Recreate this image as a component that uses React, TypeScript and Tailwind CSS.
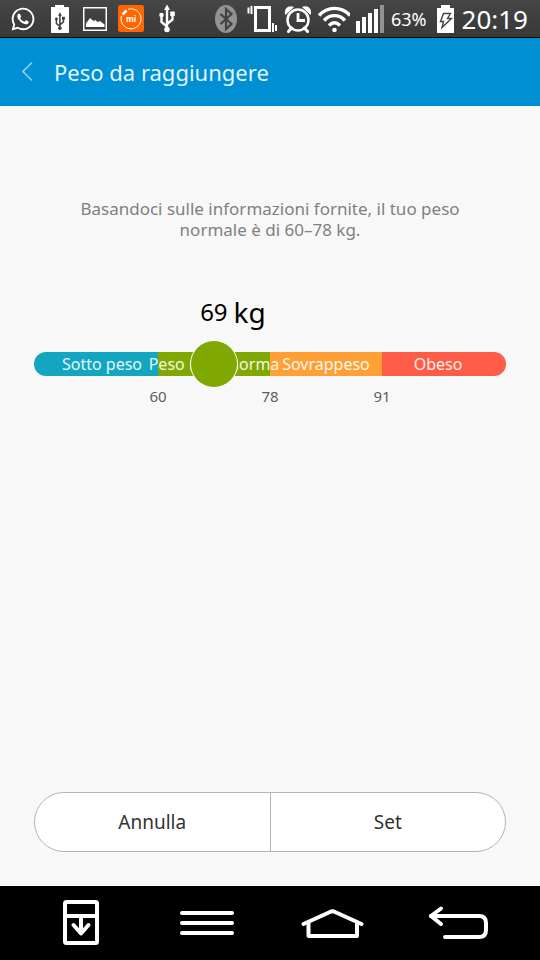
import { useState } from 'react';
import { FaWhatsapp } from 'react-icons/fa';

const MIN_WEIGHT = 44;
const MAX_WEIGHT = 112;

const RANGES = [
    { label: 'Sotto peso', color: 'bg-[#12a6c0]' },
    { label: 'Peso nella norma', color: 'bg-[#80a800]' },
    { label: 'Sovrappeso', color: 'bg-[#ffa036]' },
    { label: 'Obeso', color: 'bg-[#ff5c47]' },
];

const UsbGlyph = ({ className }: { className: string }) => (
    <g className={className} strokeWidth="2.4" strokeLinejoin="round">
        <path d="M13 4v21M13 22.5l-5.5-4.5v-6M13 20l5.5-4.5v-5" fill="none" />
        <path d="M13 0.5l3 5.5h-6z" stroke="none" />
        <circle cx="13" cy="25.5" r="2.8" stroke="none" />
        <circle cx="7.5" cy="11" r="2.3" stroke="none" />
        <path d="M16.2 7.5h4.6v4.500h-4.600z" stroke="none" />
    </g>
);

const StatusBar = () => (
    <div className="flex h-[38px] items-center justify-between border-b border-black bg-linear-to-b from-[#464646] to-[#383838] pl-2.5 pr-3 text-white">
        <div className="flex items-center gap-2.5">
            <span className="flex h-[29px] w-[26px] items-center justify-center">
                <FaWhatsapp size={26} />
            </span>
            <svg width="26" height="29" viewBox="0 0 26 29">
                <path d="M9 1h9v2h5v26H5V3h4z" fill="#fff" />
                <g transform="translate(5.6 8) scale(.64)">
                    <UsbGlyph className="fill-[#3f3f3f] stroke-[#3f3f3f]" />
                </g>
            </svg>
            <svg width="26" height="29" viewBox="0 0 26 29">
                <rect x="1.75" y="3.75" width="22.5" height="22.5" fill="none" stroke="#fff" strokeWidth="1.5" />
                <path d="M4 23v-3.5l4-5.500 3.500 3 2-1 2 2 2.500-1 4.500 3.500V23z" fill="#fff" />
            </svg>
            <svg width="26" height="29" viewBox="0 0 26 29">
                <rect y="1" width="26" height="27" rx="2.5" fill="#ff6600" />
                <path d="M10 5.300a10 10 0 1 1-6.500 6.500" fill="none" stroke="#fff" strokeWidth="1" />
                <path d="M4.500 10.500l4-4" stroke="#fff" strokeWidth="2.5" />
                <text x="13" y="18" textAnchor="middle" fill="#fff" fontSize="8" fontWeight="700" fontFamily="Noto Sans, sans-serif">mi</text>
            </svg>
            <svg width="26" height="29" viewBox="0 0 26 29">
                <UsbGlyph className="fill-white stroke-white" />
            </svg>
        </div>
        <div className="flex items-center gap-1.5">
            <svg width="26" height="29" viewBox="0 0 26 29">
                <ellipse cx="11" cy="15" rx="11" ry="14" fill="#929292" />
                <path d="M5.5 10l11 10-5.5 5V5l5.5 5-11 10" fill="none" stroke="#424242" strokeWidth="2.2" />
            </svg>
            <svg width="30" height="29" viewBox="0 0 30 29">
                <path d="M7 2h17v26H7zM10 5v20h11V5z" fill="#fff" fillRule="evenodd" />
                <path d="M1.5 3.5v6M4.5 2v8M26 19v9M29 21v6" stroke="#fff" strokeWidth="2" />
            </svg>
            <svg width="28" height="29" viewBox="0 0 28 29">
                <circle cx="15" cy="16" r="10.5" fill="none" stroke="#fff" strokeWidth="2.5" />
                <path d="M15 9v7.500h7" fill="none" stroke="#fff" strokeWidth="2.8" />
                <path d="M8.500 24l-3 3.500M21.500 24l3 3.500" stroke="#fff" strokeWidth="3" strokeLinecap="round" />
                <path d="M2.500 11C0 6 5 0 11 3zM27.500 11C30 6 25 0 19 3z" fill="#fff" />
            </svg>
            <svg width="33" height="29" viewBox="0 0 33 29">
                <g fill="none" stroke="#fff" strokeWidth="3.4">
                    <path d="M2 11.500c8.500-9.500 22.500-9.500 31 0" />
                    <path d="M7 16.500c6-6.500 15-6.500 21 0" />
                    <path d="M12 21.500c3.500-3.500 7.500-3.500 11 0" />
                </g>
                <circle cx="17.5" cy="26" r="2.3" fill="#fff" />
            </svg>
            <svg width="29" height="29" viewBox="0 0 29 29">
                <path d="M0 17h4v12H0zM6 13h4v16H6zM12 9h4v20h-4zM18 5h4v24h-4z" fill="#fff" />
                <path d="M24 1h4v28h-4z" fill="#929292" />
            </svg>
            <span className="text-[18px] leading-6">63%</span>
            <svg width="23" height="29" viewBox="0 0 23 29">
                <path d="M8 1h9v3h4v25H4V4h4z" fill="#fff" />
                <path d="M10.500 9.500h7l-3 5h4L9 23.500l1.500-6h-3z" fill="none" stroke="#444" strokeWidth="1.4" />
            </svg>
            <span className="text-[26px] leading-7">20:19</span>
        </div>
    </div>
);

const NavigationBar = () => (
    <nav className="grid h-[74px] grid-cols-4 items-center justify-items-center bg-black px-[18px]">
        <button type="button" aria-label="Riduci">
            <svg width="64" height="48" viewBox="0 0 64 48" fill="none" stroke="#fff" strokeWidth="4">
                <rect x="16" y="3" width="32" height="41" rx="1.5" />
                <path d="M16 17h32" />
                <path d="M32 17v16" />
                <path d="M24.5 26l7.5 8.500 7.500-8.500" strokeLinecap="round" strokeLinejoin="round" />
            </svg>
        </button>
        <button type="button" aria-label="Menu">
            <svg width="64" height="48" viewBox="0 0 64 48" fill="none" stroke="#fff" strokeWidth="4" strokeLinecap="round">
                <path d="M7 14h50M7 24h50M7 34h50" />
            </svg>
        </button>
        <button type="button" aria-label="Home">
            <svg width="64" height="48" viewBox="0 0 64 48" fill="none" stroke="#fff" strokeWidth="4" strokeLinecap="round" strokeLinejoin="round">
                <path d="M2.5 25L29 13q2.5-1.5 5 0L60.5 25" />
                <path d="M7.5 24v13H56V24" />
            </svg>
        </button>
        <button type="button" aria-label="Indietro">
            <svg width="64" height="48" viewBox="0 0 64 48" fill="none" stroke="#fff" strokeWidth="4" strokeLinecap="round" strokeLinejoin="round">
                <path d="M14 9.5L4 17l10 8" />
                <path d="M4 17h48q7 0 7 7v7q0 7-7 7H18" />
            </svg>
        </button>
    </nav>
);

export default function App() {
    const [weight, setWeight] = useState(69);
    const ratio = (weight - MIN_WEIGHT) / (MAX_WEIGHT - MIN_WEIGHT);

    return (
        <div className="flex min-h-screen flex-col bg-[#f8f8f8] font-['Noto_Sans',sans-serif]">
            <StatusBar />

            <header className="flex h-[68px] items-center gap-5 bg-[#008fd3] pl-[22px]">
                <button type="button" aria-label="Torna indietro">
                    <svg width="12" height="20" viewBox="0 0 12 20" fill="none" stroke="#8fd0ee" strokeWidth="1.6">
                        <path d="M10 .5L1 9.5l9 9" />
                    </svg>
                </button>
                <h1 className="text-[22px] leading-8 text-[#e2f4fc]">Peso da raggiungere</h1>
            </header>

            <main className="flex flex-1 flex-col px-[34px] pb-[34px] pt-[92px]">
                <p className="px-6 text-center text-[17px] leading-[21px] text-[#808080]">
                    Basandoci sulle informazioni fornite, il tuo peso normale è di 60–78 kg.
                </p>

                <div className="relative mt-[54px] pt-[58px]">
                    {/* Current value, centred over the thumb */}
                    <output
                        htmlFor="weight"
                        className="absolute top-0 -translate-x-1/2 text-[24px] leading-9 text-black"
                        style={{ left: `calc(24px + (100% - 48px) * ${ratio})` }}
                    >
                        {weight}
                        <span className="absolute left-full top-0 pl-1.5 text-[28px]">kg</span>
                    </output>

                    <div className="relative flex h-6">
                        <div className="w-3 rounded-l-full bg-[#12a6c0]" />
                        {RANGES.map((range) => (
                            <div key={range.label} className={`flex min-w-0 flex-1 items-center justify-center ${range.color}`}>
                                <span className="z-10 whitespace-nowrap text-[16px] leading-6 text-white/90">{range.label}</span>
                            </div>
                        ))}
                        <div className="w-3 rounded-r-full bg-[#ff5c47]" />
                        <input
                            id="weight"
                            type="range"
                            aria-label="Peso da raggiungere"
                            min={MIN_WEIGHT}
                            max={MAX_WEIGHT}
                            value={weight}
                            onChange={(e) => setWeight(Number(e.target.value))}
                            className="absolute inset-x-0 -top-3 z-20 h-12 w-full cursor-pointer appearance-none bg-transparent [&::-webkit-slider-thumb]:size-12 [&::-webkit-slider-thumb]:appearance-none [&::-webkit-slider-thumb]:rounded-full [&::-webkit-slider-thumb]:border [&::-webkit-slider-thumb]:border-white [&::-webkit-slider-thumb]:bg-[#80a800]"
                        />
                    </div>

                    <div className="mt-2 grid grid-cols-8 px-3 text-center text-[15px] leading-6 text-[#606060]">
                        <span className="col-span-2 col-start-2">60</span>
                        <span className="col-span-2">78</span>
                        <span className="col-span-2">91</span>
                    </div>
                </div>

                <div className="mt-auto flex h-[60px] overflow-hidden rounded-full border border-[#b4b4b4] bg-white text-[19px] text-[#333333]">
                    <button type="button" className="flex-1 border-r border-[#b4b4b4]">Annulla</button>
                    <button type="button" className="flex-1">Set</button>
                </div>
            </main>

            <NavigationBar />
        </div>
    );
}
